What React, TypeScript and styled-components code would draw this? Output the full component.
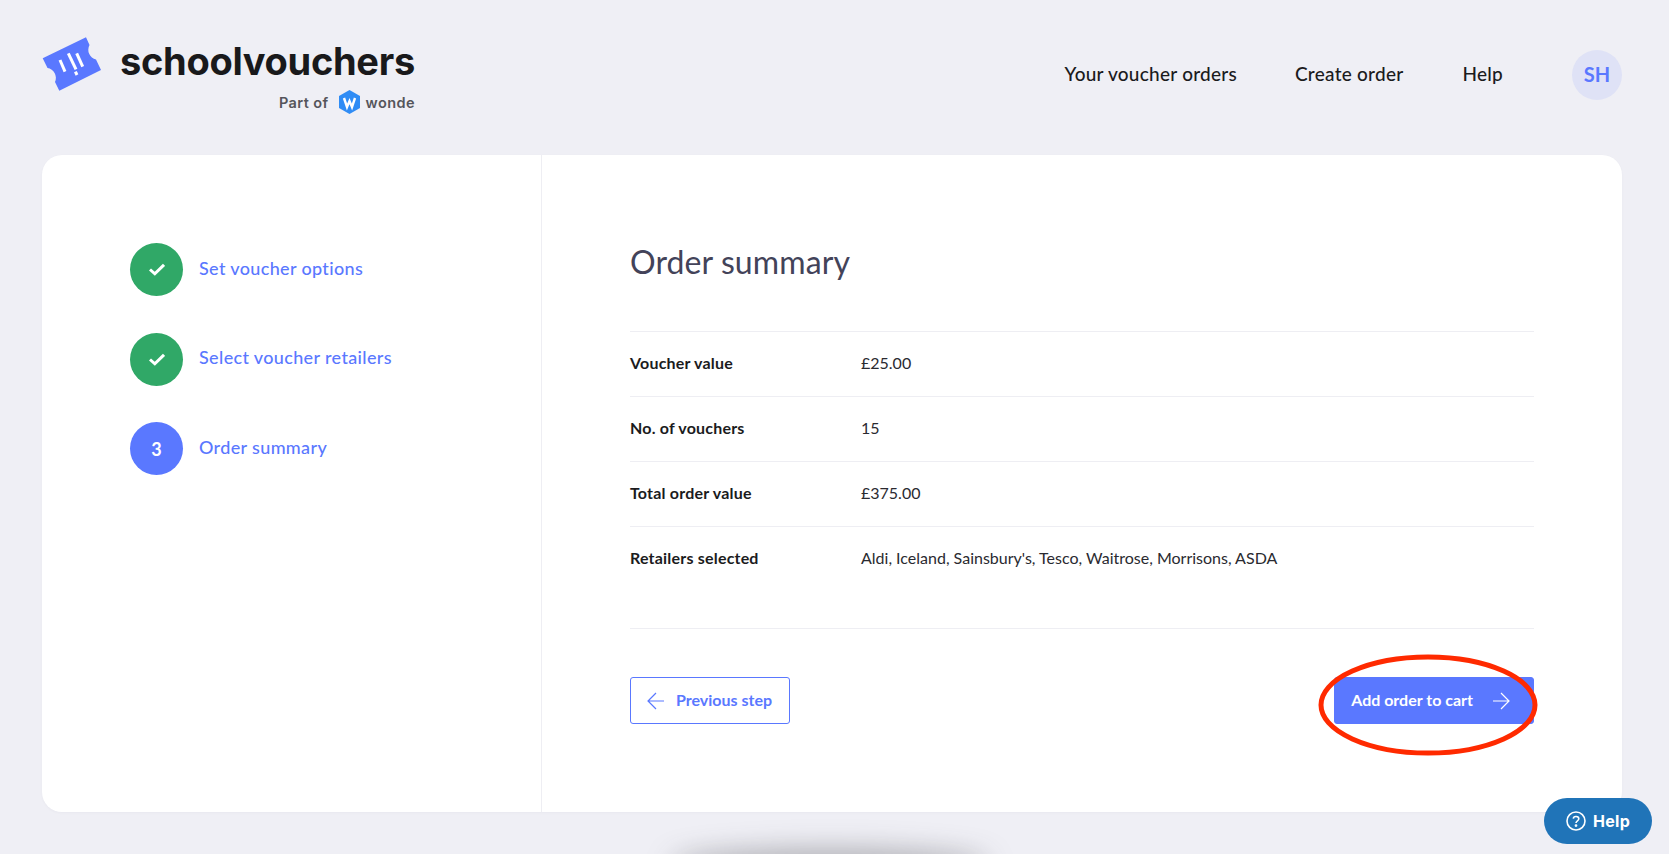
import React from 'react'
import styled, { createGlobalStyle } from 'styled-components'

const GlobalStyle = createGlobalStyle`
  html, body {
    margin: 0;
    height: 100%;
    overflow: hidden;
    background: #efeff5;
    font-family: Lato, 'Liberation Sans', sans-serif;
    color: #1b1b1d;
  }
  * {
    box-sizing: border-box;
  }
`

const Page = styled.div`
  position: relative;
  height: 854px;
  padding: 0 47px 0 42px;
  overflow: hidden;
`

const Header = styled.header`
  height: 155px;
  display: flex;
  justify-content: space-between;
  align-items: flex-start;
`

const Brand = styled.div`
  padding-top: 37px;
  display: flex;
  gap: 18px;
`

const BrandText = styled.div`
  display: flex;
  flex-direction: column;
  align-items: flex-end;
`

const BrandName = styled.div`
  font-family: Inter, sans-serif;
  font-size: 38px;
  line-height: 48px;
  font-weight: 700;
  letter-spacing: -0.3px;
  color: #19191b;
`

const PartOf = styled.div`
  display: flex;
  align-items: center;
  height: 24px;
  margin-top: 5px;
  font-family: Inter, sans-serif;
  font-size: 14.5px;
  font-weight: 600;
  letter-spacing: 0.4px;
  color: #55555b;
`

const WondeMark = styled.svg`
  margin: 0 6px 0 10px;
`

const Nav = styled.nav`
  display: flex;
  align-items: center;
  padding-top: 50px;
`

const NavLink = styled.a<{ $gap: number }>`
  font-size: 19px;
  font-weight: 500;
  letter-spacing: 0.25px;
  color: #1b1b1d;
  margin-right: ${({ $gap }) => $gap}px;
  padding-bottom: 3px;
`

const Avatar = styled.div`
  width: 50px;
  height: 50px;
  border-radius: 50%;
  background: #dfe2f6;
  color: #5a78ff;
  display: flex;
  align-items: center;
  justify-content: center;
  font-size: 20px;
  font-weight: 700;
  padding-bottom: 2px;
`

const Card = styled.main`
  height: 657px;
  background: #fff;
  border-radius: 20px;
  display: flex;
  box-shadow: 0 1px 3px rgba(30, 30, 60, 0.03);
`

const Sidebar = styled.aside`
  width: 500px;
  flex: none;
  border-right: 1px solid #eeeef3;
  padding: 88px 0 0 88px;
  display: flex;
  flex-direction: column;
  gap: 36.5px;
`

const Step = styled.div`
  display: flex;
  align-items: center;
  gap: 16px;
  height: 53px;
`

const StepCircle = styled.div<{ $done?: boolean }>`
  width: 53px;
  height: 53px;
  border-radius: 50%;
  background: ${({ $done }) => ($done ? '#30a867' : '#5a78ff')};
  color: #fff;
  display: flex;
  align-items: center;
  justify-content: center;
  font-size: 18px;
  font-weight: 700;
`

const StepLabel = styled.span`
  font-size: 18px;
  font-weight: 500;
  letter-spacing: 0.35px;
  color: #5a78ff;
  padding-bottom: 4px;
`

const Content = styled.section`
  flex: 1;
  padding: 88px 88px 0;
`

const Title = styled.h1`
  margin: 0;
  height: 88px;
  font-size: 32px;
  line-height: 38px;
  font-weight: 400;
  letter-spacing: 0.1px;
  color: #434359;
`

const Table = styled.div`
  padding-bottom: 37px;
  border-bottom: 1px solid #eeeef3;
`

const Row = styled.div`
  height: 65px;
  display: flex;
  align-items: center;
  font-size: 16px;
  padding-bottom: 4px;
  border-top: 1px solid #eeeef3;
`

const RowLabel = styled.div`
  width: 231px;
  font-weight: 700;
  letter-spacing: 0.2px;
  color: #1b1b1d;
`

const RowValue = styled.div`
  color: #2a2a30;
`

const Actions = styled.div`
  display: flex;
  justify-content: space-between;
  margin-top: 48px;
`

const Button = styled.button<{ $primary?: boolean }>`
  height: 47px;
  border-radius: 3px;
  border: 1px solid #5a78ff;
  background: ${({ $primary }) => ($primary ? '#5a78ff' : '#fff')};
  color: ${({ $primary }) => ($primary ? '#fff' : '#5a78ff')};
  font-family: inherit;
  font-size: 16px;
  font-weight: 700;
  display: flex;
  align-items: center;
  gap: ${({ $primary }) => ($primary ? '19px' : '11px')};
  padding: ${({ $primary }) => ($primary ? '0 23px 0 16px' : '0 17px 0 16px')};
`

const ButtonText = styled.span`
  padding-bottom: 3px;
`

const Arrow = styled.svg`
  flex: none;
`

const RedEllipse = styled.svg`
  position: absolute;
  left: 1316px;
  top: 652px;
`

const HelpButton = styled.button`
  position: fixed;
  left: 1544px;
  top: 798px;
  width: 108px;
  height: 46px;
  border: 0;
  border-radius: 23px;
  background: #2074b8;
  color: #fff;
  display: flex;
  align-items: center;
  justify-content: center;
  gap: 7px;
  font-family: Inter, sans-serif;
  font-size: 16px;
  font-weight: 700;
  letter-spacing: 0.3px;
`

const BottomShade = styled.div`
  position: absolute;
  left: 670px;
  top: 850px;
  width: 320px;
  height: 30px;
  border-radius: 50%;
  background: rgba(40, 40, 45, 0.35);
  filter: blur(14px);
`

const TicketLogo = () => (
  <svg width="60" height="56" viewBox="0 0 60 56">
    <path
      d="M0.7 21.3 L44 0.3 L47.5 8 A10 10 0 0 0 54 22.5 L59 33 L17.3 53.7 L13 45 A10 10 0 0 0 5.5 31 Z"
      fill="#5a78ff"
    />
    <g stroke="#fff" strokeWidth="3">
      <path d="M18 23 L23 34.7" />
      <path d="M26.3 16.3 L34 32.3" />
      <path d="M34.7 16.3 L40.7 29.7" />
      <path d="M33.4 34.7 L35 38" />
    </g>
  </svg>
)

const CheckIcon = () => (
  <svg width="16" height="13" viewBox="0 0 16 13">
    <path d="M1 6.5 L5.8 10.8 L15 1.8" fill="none" stroke="#fff" strokeWidth="3" />
  </svg>
)

const ArrowIcon = ({ left }: { left?: boolean }) => (
  <Arrow width="18" height="18" viewBox="0 0 18 18" fill="none" stroke="currentColor" strokeWidth="1.2">
    {left ? <path d="M17 9 H1 M9 1 L1 9 L9 17" /> : <path d="M1 9 H17 M9 1 L17 9 L9 17" />}
  </Arrow>
)

const rows = [
  ['Voucher value', '£25.00'],
  ['No. of vouchers', '15'],
  ['Total order value', '£375.00'],
  ['Retailers selected', "Aldi, Iceland, Sainsbury's, Tesco, Waitrose, Morrisons, ASDA"],
]

const App: React.FC = () => (
  <Page>
    <GlobalStyle />
    <Header>
      <Brand>
        <TicketLogo />
        <BrandText>
          <BrandName>schoolvouchers</BrandName>
          <PartOf>
            Part of
            <WondeMark width="21" height="24" viewBox="0 0 21 24">
              <path d="M10.5 0 L21 6 V18 L10.5 24 L0 18 V6 Z" fill="#2f8cf5" />
              <path d="M5 8 L8 17 L10.5 11 L13 17 L16 8" fill="none" stroke="#fff" strokeWidth="2.4" />
            </WondeMark>
            wonde
          </PartOf>
        </BrandText>
      </Brand>
      <Nav>
        <NavLink $gap={58}>Your voucher orders</NavLink>
        <NavLink $gap={59}>Create order</NavLink>
        <NavLink $gap={69}>Help</NavLink>
        <Avatar>SH</Avatar>
      </Nav>
    </Header>
    <Card>
      <Sidebar>
        <Step>
          <StepCircle $done>
            <CheckIcon />
          </StepCircle>
          <StepLabel>Set voucher options</StepLabel>
        </Step>
        <Step>
          <StepCircle $done>
            <CheckIcon />
          </StepCircle>
          <StepLabel>Select voucher retailers</StepLabel>
        </Step>
        <Step>
          <StepCircle>3</StepCircle>
          <StepLabel>Order summary</StepLabel>
        </Step>
      </Sidebar>
      <Content>
        <Title>Order summary</Title>
        <Table>
          {rows.map(([label, value]) => (
            <Row key={label}>
              <RowLabel>{label}</RowLabel>
              <RowValue>{value}</RowValue>
            </Row>
          ))}
        </Table>
        <Actions>
          <Button>
            <ArrowIcon left />
            <ButtonText>Previous step</ButtonText>
          </Button>
          <Button $primary>
            <ButtonText>Add order to cart</ButtonText>
            <ArrowIcon />
          </Button>
        </Actions>
      </Content>
    </Card>
    <BottomShade />
    <RedEllipse width="224" height="106" viewBox="0 0 224 106">
      <ellipse cx="112" cy="53" rx="107" ry="48" fill="none" stroke="#ff2a00" strokeWidth="5" />
    </RedEllipse>
    <HelpButton>
      <svg width="20" height="20" viewBox="0 0 20 20" fill="none" stroke="#fff" strokeWidth="1.6">
        <circle cx="10" cy="10" r="9" />
        <path d="M7.3 7.6 C7.5 4.6 12.8 4.8 12.8 7.8 C12.8 9.8 10 9.8 10 12" />
        <circle cx="10" cy="14.6" r="0.6" />
      </svg>
      Help
    </HelpButton>
  </Page>
)

export default App
